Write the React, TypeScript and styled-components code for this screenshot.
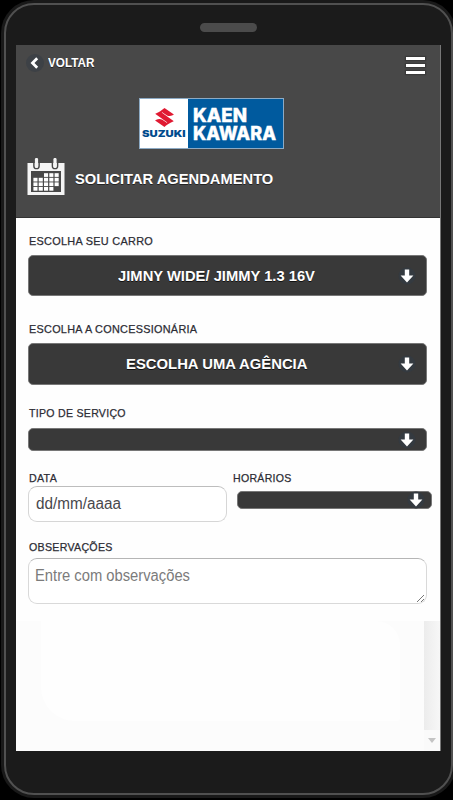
import React from "react";
import styled, { createGlobalStyle } from "styled-components";
import { SiSuzuki } from "react-icons/si";

const GlobalStyle = createGlobalStyle`
  * { box-sizing: border-box; }
  html, body { margin: 0; background: #000; overflow: hidden; }
  body { font-family: "Liberation Sans", Arial, sans-serif; }
`;

const Stage = styled.main`
  width: 453px;
  height: 800px;
  padding: 3px 0 5px 4px;
  background: #000;
  overflow: hidden;
`;

const Phone = styled.div`
  width: 449px;
  height: 792px;
  display: flex;
  flex-direction: column;
  padding: 18px 10px 0 10px;
  border: 2px solid #505050;
  border-radius: 30px;
  background: #1b1b1b;
  box-shadow: 0 0 0 3px #191919;
`;

const Speaker = styled.div`
  width: 57px;
  height: 9px;
  margin: 0 0 13px 184px;
  border-radius: 5px;
  background: #4b4b4b;
`;

const Screen = styled.div`
  width: 425px;
  height: 706px;
  display: flex;
  flex-direction: column;
  background: #fefefe;
  border-right: 1px solid #777;
`;

const Header = styled.header`
  height: 173px;
  padding: 8px 15px 0 11px;
  display: flex;
  flex-direction: column;
  background: #484848;
  border-bottom: 1px solid #333;
`;

const TopBar = styled.div`
  height: 45px;
  display: flex;
  justify-content: space-between;
  align-items: flex-start;
`;

/* Slightly condensed lettering, shared by every text of the form */
const Condensed = styled.span<{ $x: number; $origin?: string }>`
  display: inline-block;
  transform: scaleX(${(p) => p.$x});
  transform-origin: ${(p) => p.$origin ?? "left"} center;
  white-space: nowrap;
`;

const Back = styled.button`
  display: flex;
  align-items: center;
  gap: 4px;
  height: 19px;
  margin-left: -1px;
  padding: 0;
  border: 0;
  background: none;
  color: #fff;
  font: bold 13px "Liberation Sans", Arial, sans-serif;
  text-shadow: 0 1px 0 #222;
`;

const IconDisc = styled.span`
  display: flex;
  align-items: center;
  justify-content: center;
  flex: none;
  width: 18px;
  height: 18px;
  border-radius: 50%;
  background: #3d4146;
`;

const ArrowSvg = styled.svg`
  flex: none;
`;

const Menu = styled.div`
  width: 19px;
  display: grid;
  gap: 4px;
  margin-top: 4px;
  & > i { height: 3px; background: #fff; box-shadow: 0 0 1px 1px #3a3a3a; }
`;

const Logo = styled.div`
  display: flex;
  width: 145px;
  height: 51px;
  margin-left: 112px;
  border: 1px solid #8caac4;
  background: #005a9e;
`;

const Brand = styled.div`
  width: 48px;
  display: flex;
  flex-direction: column;
  align-items: center;
  padding-top: 9px;
  background: #fff;
  color: #e01a32;
`;

const TitleRow = styled.div`
  display: flex;
  align-items: center;
  height: 42px;
  margin-top: 7px;
  gap: 10px;
`;

const Title = styled.h1`
  margin: 3px 0 0;
  font-size: 15.5px;
  line-height: 18px;
  color: #fff;
  text-shadow: 0 1px 0 #222;
`;

const Form = styled.form`
  height: 403px;
  padding: 16px 13px 0 12px;
  display: flex;
  flex-direction: column;
`;

const LabelBox = styled.label`
  display: block;
  height: 14px;
  padding-left: 0.5px;
  font-size: 11.5px;
  line-height: 14px;
  letter-spacing: 0.3px;
  color: #2c2c34;
  -webkit-text-stroke: 0.25px #2c2c34;
`;

const Select = styled.div<{ $h: number; $top: number; $bottom: number; $arrow?: number }>`
  display: flex;
  align-items: center;
  height: ${(p) => p.$h}px;
  margin: ${(p) => p.$top}px 0 ${(p) => p.$bottom}px;
  padding-right: ${(p) => p.$arrow ?? 10}px;
  border: 1px solid #777;
  border-radius: 5px;
  background: #393939;
  color: #fff;
`;

const Value = styled.span`
  flex: 1;
  padding-left: 6px;
  text-align: center;
  font-size: 15.5px;
  font-weight: bold;
  line-height: 18px;
  text-shadow: 0 1px 0 #111;
`;

const Columns = styled.div`
  display: grid;
  grid-template-columns: 199px 200px;
  column-gap: 5px;
  width: 404px;
  height: 69px;
`;

const DateField = styled.div`
  height: 36px;
  margin-top: 1px;
  padding: 0 7px;
  border: 1px solid #d6d6d6;
  border-top: 1px solid #bdbdbd;
  border-radius: 9px;
  background: #fff;
  color: #48484c;
  font-size: 16px;
  line-height: 34px;
`;

const HourField = styled.div`
  margin-left: 5px;
`;

const Notes = styled.div`
  display: flex;
  justify-content: space-between;
  height: 46px;
  margin-top: 4px;
  padding: 8px 0 0 6px;
  border: 1px solid #d9d9d9;
  border-top-color: #b5b5b5;
  border-radius: 9px;
  color: #7b7b7b;
  font-size: 16px;
  line-height: 18px;
  background: #fff;
`;

const Grip = styled.svg`
  align-self: flex-end;
  margin-right: 1px;
`;

const Lower = styled.div`
  flex: 1;
  display: flex;
  background: #fcfcfc;
`;

const Blank = styled.div`
  flex: 1;
  margin: 0 24px 30px 25px;
  border-radius: 0 24px 4px 34px;
  background: #fefefe;
`;

const Scroll = styled.div`
  width: 16px;
  display: flex;
  flex-direction: column;
  justify-content: flex-end;
  background: linear-gradient(90deg, #ececec, #f7f7f7);
`;

const ScrollButton = styled.div`
  height: 21px;
  display: flex;
  align-items: center;
  justify-content: center;
  background: #fafafa;
`;

const Label = ({ children, x = 0.945 }: { children: React.ReactNode; x?: number }) => (
  <LabelBox>
    <Condensed $x={x}>{children}</Condensed>
  </LabelBox>
);

const DownArrow = () => (
  <ArrowSvg width="18" height="18" viewBox="0 0 18 18">
    <circle cx="9" cy="9" r="8.5" fill="#343a40" />
    <path d="M6.8 2.5h4.4v6h4.2L9 15.6 2.6 8.5h4.2z" fill="#fff" />
  </ArrowSvg>
);

const CalendarIcon = () => (
  <svg width="38" height="38" viewBox="0 0 38 38">
    <path fill="#f4f4f4" fillRule="evenodd" d="M0.5 5h37v32h-37zM4 13v21h30V13z" />
    {[9.5, 28].map((x) => (
      <g key={x}>
        <path d={`M${x - 2.6} 4v4a2.6 2.6 0 0 0 5.2 0V4`} fill="none" stroke="#484848" strokeWidth="1.5" />
        <path d={`M${x} 1.5v7`} stroke="#f4f4f4" strokeWidth="3.2" strokeLinecap="round" />
      </g>
    ))}
    {[0, 1, 2, 3].map((row) =>
      [0, 1, 2, 3, 4].map((col) =>
        (row === 0 && col < 2) || (row === 3 && col === 4) ? null : (
          <rect key={`${row}-${col}`} x={6.4 + col * 5.3} y={15.2 + row * 4.6} width="4.1" height="3.7" fill="#fff" />
        )
      )
    )}
  </svg>
);

export default function App() {
  return (
    <>
      <GlobalStyle />
      <Stage>
        <Phone>
          <Speaker />
          <Screen>
            <Header>
              <TopBar>
                <Back>
                  <IconDisc>
                    <svg width="18" height="18" viewBox="0 0 18 18">
                      <path d="M11.2 4.3 6.5 9l4.7 4.7" fill="none" stroke="#fff" strokeWidth="2.8" />
                    </svg>
                  </IconDisc>
                  <Condensed $x={0.9}>VOLTAR</Condensed>
                </Back>
                <Menu><i /><i /><i /></Menu>
              </TopBar>
              <Logo>
                <Brand>
                  <SiSuzuki size={19} />
                  <svg width="46" height="12" viewBox="0 0 46 12">
                    <text x="1" y="9.5" fontFamily="Inter, sans-serif" fontWeight="900" fontSize="9" fill="#004b8d" textLength="43.5" lengthAdjust="spacingAndGlyphs">SUZUKI</text>
                  </svg>
                </Brand>
                <svg width="95" height="49" viewBox="0 0 95 49" fontFamily="Inter, sans-serif" fontWeight="800" fontSize="18.3" fill="#fff" stroke="#fff" strokeWidth="0.4">
                  <text x="5" y="23.3" textLength="54" lengthAdjust="spacingAndGlyphs">KAEN</text>
                  <text x="5" y="40.8" textLength="83" lengthAdjust="spacingAndGlyphs">KAWARA</text>
                </svg>
              </Logo>
              <TitleRow>
                <CalendarIcon />
                <Title><Condensed $x={0.949}>SOLICITAR AGENDAMENTO</Condensed></Title>
              </TitleRow>
            </Header>
            <Form>
              <Label x={0.947}>ESCOLHA SEU CARRO</Label>
              <Select $h={41} $top={7} $bottom={26}>
                <Value><Condensed $x={0.951} $origin="center">JIMNY WIDE/ JIMMY 1.3 16V</Condensed></Value>
                <DownArrow />
              </Select>
              <Label x={0.943}>ESCOLHA A CONCESSIONÁRIA</Label>
              <Select $h={42} $top={7} $bottom={21}>
                <Value><Condensed $x={0.958} $origin="center">ESCOLHA UMA AGÊNCIA</Condensed></Value>
                <DownArrow />
              </Select>
              <Label x={0.92}>TIPO DE SERVIÇO</Label>
              <Select $h={23} $top={8} $bottom={20}>
                <Value />
                <DownArrow />
              </Select>
              <Columns>
                <div>
                  <Label x={0.93}>DATA</Label>
                  <DateField><Condensed $x={0.955}>dd/mm/aaaa</Condensed></DateField>
                </div>
                <div>
                  <Label x={0.92}>HORÁRIOS</Label>
                  <HourField>
                    <Select $h={18} $top={6} $bottom={0} $arrow={6}>
                      <Value />
                      <DownArrow />
                    </Select>
                  </HourField>
                </div>
              </Columns>
              <Label x={0.925}>OBSERVAÇÕES</Label>
              <Notes>
                <Condensed $x={0.922}>Entre com observações</Condensed>
                <Grip width="9" height="9" viewBox="0 0 9 9">
                  <path d="M1 8 8 1M5 8l3-3" stroke="#777" fill="none" />
                </Grip>
              </Notes>
            </Form>
            <Lower>
              <Blank />
              <Scroll>
                <ScrollButton>
                  <svg width="8" height="5" viewBox="0 0 8 5"><path d="M0 0h8L4 5z" fill="#c4c4c4" /></svg>
                </ScrollButton>
              </Scroll>
            </Lower>
          </Screen>
        </Phone>
      </Stage>
    </>
  );
}
